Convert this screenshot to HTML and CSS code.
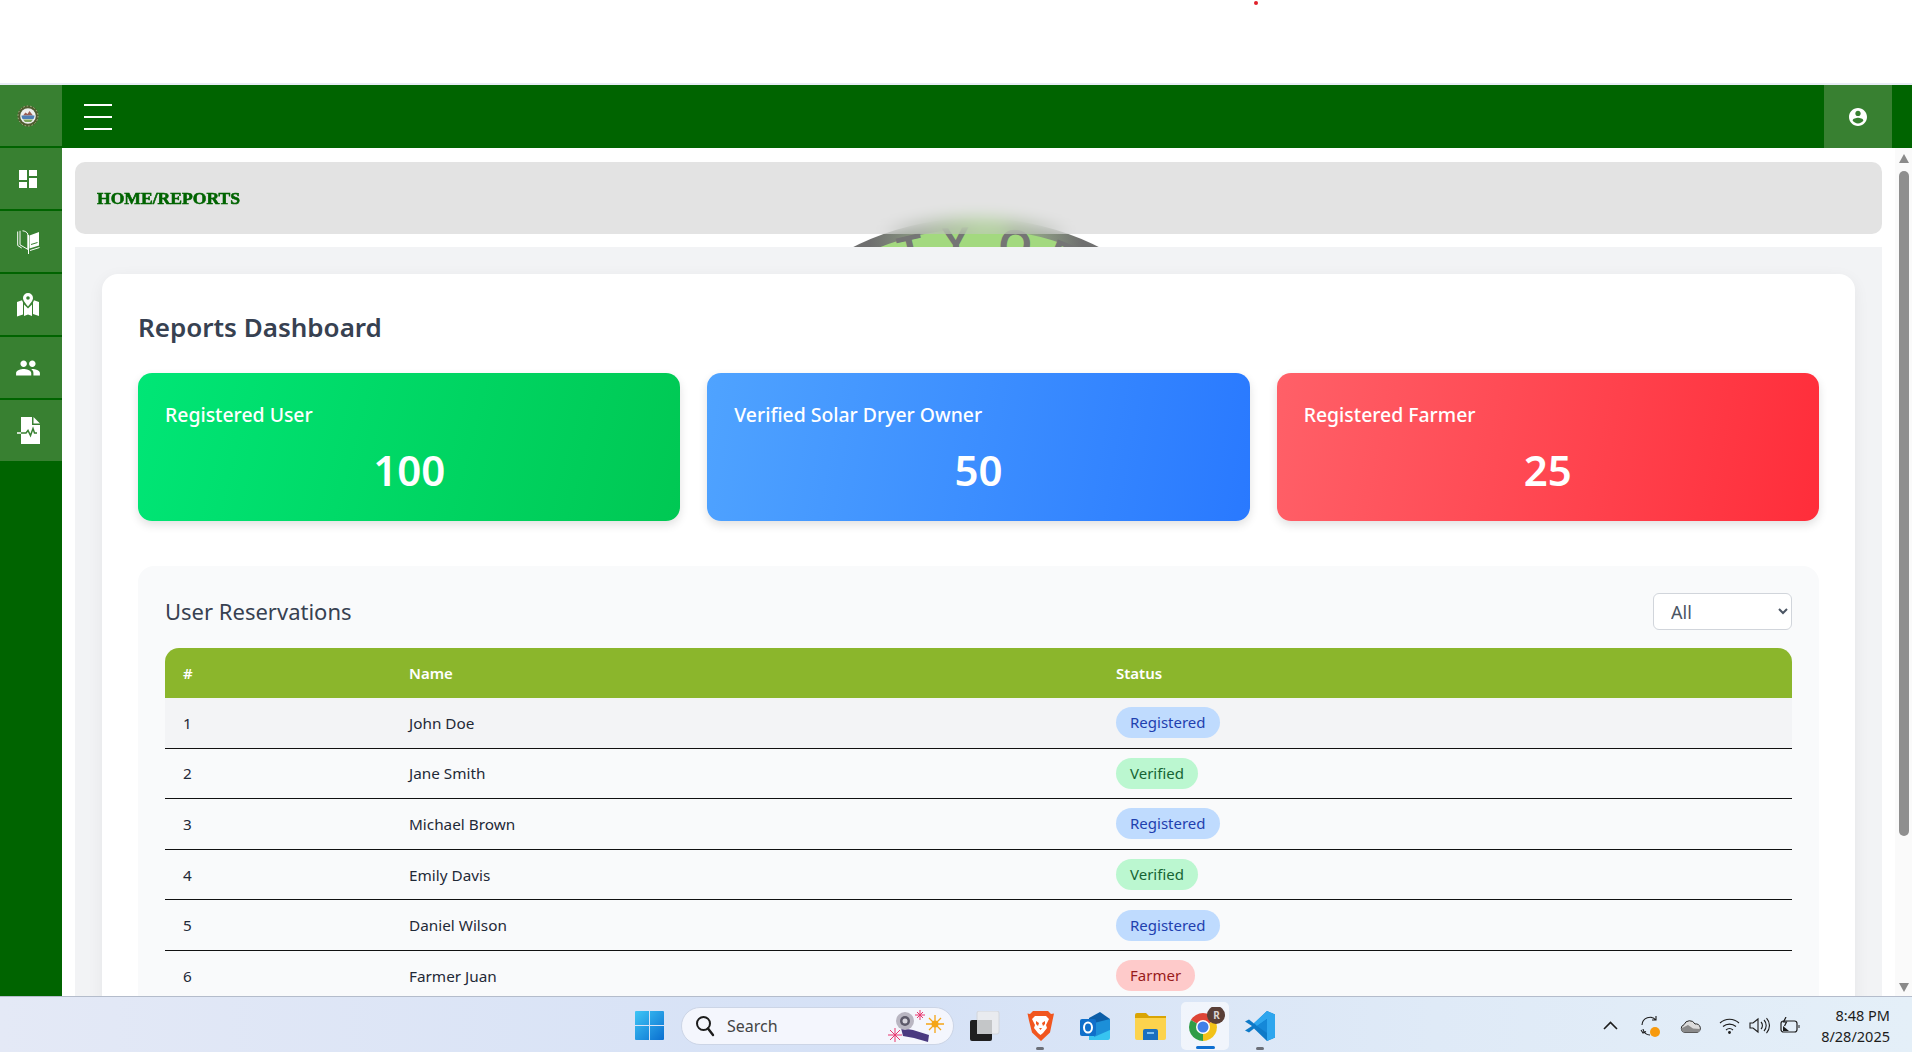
FILE: index.html
```html
<!DOCTYPE html>
<html lang="en">
<head>
<meta charset="utf-8">
<title>Reports Dashboard</title>
<link rel="stylesheet" href="styles.css">
</head>
<body>
<div class="top-strip"><span class="red-dot"></span></div>
<div class="app">
  <aside class="sidebar">
    <a class="side-item">
      <svg width="24" height="24" viewBox="0 0 24 24"><circle cx="12" cy="12" r="10.500" fill="#4f5c2f"/><circle cx="12" cy="12" r="10" fill="none" stroke="#a9b98a" stroke-width="1" stroke-dasharray="1.500 2"/><circle cx="12" cy="12" r="7.800" fill="#eef1ee"/><path d="M7 11.500l2.500-3 2 1.500 2-3 3.500 4.500z" fill="#9a5f55"/><path d="M5.500 11.500h13a6.500 6.500 0 0 1-1 3.500h-11a6.500 6.500 0 0 1-1-3.500z" fill="#4d7fb5"/><path d="M7 15.500h10l-2 2.500H9z" fill="#7da65a"/></svg>
    </a>
    <a class="side-item">
      <svg width="24" height="24" viewBox="0 0 24 24"><path fill="#fff" d="M3 13h8V3H3v10zm0 8h8v-6H3v6zm10 0h8V11h-8v10zm0-18v6h8V3h-8z"/></svg>
    </a>
    <a class="side-item">
      <svg width="23" height="24" viewBox="0 0 23 24"><path fill="#fff" d="M12.500 5.500L22 2v13.500l-9.500 3z"/><g fill="none" stroke="#fff" stroke-width="1"><path d="M.7 1.500v14l4 2.500M3 .8v14l8.500 5M5.500.8C8 1 9.800 2 10.800 4v15"/><path d="M11.500 5v19"/><path d="M13 20.500l9.500-3"/></g><path d="M14 14.500l6.500-2" stroke="#388031" stroke-width="1"/></svg>
    </a>
    <a class="side-item">
      <svg width="24" height="24" viewBox="0 0 24 24"><path fill="#fff" fill-rule="evenodd" d="M12 0a5 5 0 0 1 5 5c0 2.500-3 6-5 8.500C10 11 7 7.500 7 5a5 5 0 0 1 5-5zm0 3.200a1.800 1.800 0 1 0 0 3.600 1.800 1.800 0 0 0 0-3.600z"/><path fill="#fff" d="M1 9l5-1.800 1 2.300v12L1 23.500zM8 11.500l4 4 4-4V23l-4-1.500L8 23zM17 9.500l1-2.300L23 9v14l-6-2z"/></svg>
    </a>
    <a class="side-item">
      <svg width="26" height="26" viewBox="0 0 24 24"><path fill="#fff" d="M16 11c1.660 0 2.990-1.340 2.990-3S17.660 5 16 5c-1.660 0-3 1.340-3 3s1.340 3 3 3zm-8 0c1.660 0 2.990-1.340 2.990-3S9.660 5 8 5C6.340 5 5 6.340 5 8s1.340 3 3 3zm0 2c-2.330 0-7 1.170-7 3.500V19h14v-2.500c0-2.330-4.670-3.500-7-3.500zm8 0c-.290 0-.620.020-.970.050 1.160.840 1.970 1.970 1.970 3.450V19h6v-2.500c0-2.330-4.670-3.500-7-3.500z"/></svg>
    </a>
    <a class="side-item">
      <svg width="23" height="27" viewBox="0 0 23 27"><path fill="#fff" d="M4 0h11v8h8v19H4zM16.500 0L23 6.500h-6.500z"/><path d="M0 16h9l2-2.500 2.500 5 2.500-7 1.500 4.500h2.500" fill="none" stroke="#388031" stroke-width="1.500"/><path d="M0 16h4" stroke="#fff" stroke-width="1.500"/></svg>
    </a>
  </aside>
  <div class="right-col">
    <header class="topbar">
      <button class="burger"><span></span><span></span><span></span></button>
      <button class="profile">
        <svg width="18" height="18" viewBox="2 2 20 20"><path fill="#fff" d="M12 2C6.480 2 2 6.480 2 12s4.480 10 10 10 10-4.480 10-10S17.520 2 12 2zm0 3c1.660 0 3 1.340 3 3s-1.340 3-3 3-3-1.340-3-3 1.340-3 3-3zm0 14.200c-2.500 0-4.710-1.280-6-3.220.030-1.990 4-3.080 6-3.080 1.990 0 5.970 1.090 6 3.080-1.290 1.940-3.500 3.220-6 3.220z"/></svg>
      </button>
    </header>
    <div class="body-row">
      <main class="content">
        <svg class="watermark" width="600" height="300" viewBox="0 0 600 300">
          <defs>
            <path id="arc" d="M 40 276 A 236 236 0 0 1 512 276"/>
            <linearGradient id="ring" gradientUnits="userSpaceOnUse" x1="170" y1="0" x2="382" y2="0">
              <stop offset="0" stop-color="#6f6f6f"/>
              <stop offset="0.25" stop-color="#8d9d84"/>
              <stop offset="0.45" stop-color="#a3d97f"/>
              <stop offset="0.6" stop-color="#a3d97f"/>
              <stop offset="0.8" stop-color="#8d9d84"/>
              <stop offset="1" stop-color="#6f6f6f"/>
            </linearGradient>
          </defs>
          <circle cx="276" cy="276" r="274" fill="url(#ring)"/>
          <circle cx="276" cy="276" r="263" fill="#a3d97f"/>
          <text class="wm-text"><textPath href="#arc" startOffset="47.400%" text-anchor="middle">CITY OF</textPath></text>
        </svg>
        <div class="breadcrumb">HOME/REPORTS</div>
        <section class="panel">
          <div class="card">
            <h1 class="title">Reports Dashboard</h1>
            <div class="stats">
              <div class="stat stat-green"><div class="stat-label">Registered User</div><div class="stat-num">100</div></div>
              <div class="stat stat-blue"><div class="stat-label">Verified Solar Dryer Owner</div><div class="stat-num">50</div></div>
              <div class="stat stat-red"><div class="stat-label">Registered Farmer</div><div class="stat-num">25</div></div>
            </div>
            <div class="res-card">
              <div class="res-head">
                <h2 class="res-title">User Reservations</h2>
                <select class="res-select"><option>All</option></select>
              </div>
              <table class="res-table">
                <colgroup><col class="c1"><col class="c2"><col class="c3"></colgroup>
                <thead><tr><th>#</th><th>Name</th><th>Status</th></tr></thead>
                <tbody>
                  <tr><td>1</td><td>John Doe</td><td><span class="badge b-reg">Registered</span></td></tr>
                  <tr><td>2</td><td>Jane Smith</td><td><span class="badge b-ver">Verified</span></td></tr>
                  <tr><td>3</td><td>Michael Brown</td><td><span class="badge b-reg">Registered</span></td></tr>
                  <tr><td>4</td><td>Emily Davis</td><td><span class="badge b-ver">Verified</span></td></tr>
                  <tr><td>5</td><td>Daniel Wilson</td><td><span class="badge b-reg">Registered</span></td></tr>
                  <tr><td>6</td><td>Farmer Juan</td><td><span class="badge b-far">Farmer</span></td></tr>
                </tbody>
              </table>
            </div>
          </div>
        </section>
      </main>
      <div class="scrollbar">
        <span class="arrow-up"></span>
        <span class="thumb"></span>
        <span class="arrow-down"></span>
      </div>
    </div>
  </div>
</div>
<footer class="taskbar">
  <div class="tb-center">
    <div class="tb-icon">
      <svg width="29" height="29" viewBox="0 0 29 29"><defs><linearGradient id="win" x1="0" y1="0" x2="1" y2="1"><stop offset="0" stop-color="#3fc6f6"/><stop offset="1" stop-color="#0a6fd0"/></linearGradient></defs><path fill="url(#win)" d="M1 0h13v14H0V1a1 1 0 0 1 1-1zM15 0h13a1 1 0 0 1 1 1v13H15zM0 15h14v14H1a1 1 0 0 1-1-1zM15 15h14v13a1 1 0 0 1-1 1H15z"/></svg>
    </div>
    <div class="search">
      <svg class="search-glass" width="20" height="22" viewBox="0 0 20 22"><circle cx="8.500" cy="8.500" r="6.500" fill="none" stroke="#1c1c1c" stroke-width="2"/><path d="M13 13.500l5 6.500" stroke="#1c1c1c" stroke-width="2.400" stroke-linecap="round"/></svg>
      <span class="search-text">Search</span>
      <svg class="search-art" width="62" height="36" viewBox="0 0 62 36"><g fill="none" stroke="#e8366e" stroke-width="1"><path d="M8 20v14M1 27h14M3 22l10 10M13 22L3 32"/><path d="M33 2v10M28 7h10M30 4l6 6M36 4l-6 6"/></g><g stroke="#f5a516" stroke-width="1.300"><path d="M48 7v18M39 16h18M42 10l12 12M54 10L42 22"/></g><circle cx="48" cy="16" r="3.500" fill="#f5a516"/><path d="M14 20l12 2 16 5-1 7-14-4-11-2z" fill="#4a3a80"/><circle cx="18" cy="13" r="9" fill="#b9b6c2"/><circle cx="18" cy="13" r="5" fill="#5d5a6a"/><circle cx="18" cy="13" r="2.500" fill="#d8d6de"/></svg>
    </div>
    <div class="tb-icon">
      <svg width="30" height="30" viewBox="0 0 30 30"><rect x="7" y="0" width="22" height="23" rx="2" fill="#e9ebef" stroke="#d2d6dc"/><rect x="0" y="9" width="22" height="21" rx="2" fill="#1f1f1f"/><rect x="7" y="9" width="15" height="14" fill="#c4c6c8"/></svg>
    </div>
    <div class="tb-icon">
      <svg width="27" height="32" viewBox="0 0 27 32"><path fill="#f1561f" d="M6 1h15l3 3 3-.500-1.500 7-2.500 12-9 8.500-9-8.500L2 10.500.5 3.500 3 4z"/><path fill="#fff" d="M8 6h11l3 3-3 6 1 3-4 5-2.500 2L11 23l-4-5 1-3-3-6z"/><path fill="#f1561f" d="M9 11l3 2-1 3-2-2zM18 11l-3 2 1 3 2-2zM12 18h3l-1.500 2z"/></svg>
      <span class="dot"></span>
    </div>
    <div class="tb-icon">
      <svg width="30" height="28" viewBox="0 0 30 28"><path fill="#0c5ea8" d="M9 6L20 0l10 7v9H9z"/><path fill="#37c4f0" d="M9 16h21v10a2 2 0 0 1-2 2H9z"/><path fill="#1c8fd8" d="M14 11l16-4v11L14 25z"/><rect x="0" y="7" width="16" height="17" rx="2" fill="#0f6fca"/><ellipse cx="8" cy="15.500" rx="4" ry="5" fill="none" stroke="#fff" stroke-width="2"/></svg>
    </div>
    <div class="tb-icon">
      <svg width="31" height="28" viewBox="0 0 31 28"><path fill="#d9a404" d="M0 3a2 2 0 0 1 2-2h9l3 3h17v8H0z"/><path fill="#fcd34d" d="M0 6h31v20a2 2 0 0 1-2 2H2a2 2 0 0 1-2-2z"/><path fill="#1a6fc0" d="M8 19a2 2 0 0 1 2-2h11a2 2 0 0 1 2 2v9H8z"/><rect x="12" y="20" width="7" height="2" fill="#7fc0f0"/></svg>
    </div>
    <div class="tb-icon tb-active">
      <svg width="40" height="38" viewBox="0 0 40 38"><path fill="#dd4436" d="M18 20L5.900 13A14 14 0 0 1 30.100 13z"/><path fill="#f2c218" d="M18 20L30.100 13A14 14 0 0 1 18 34z"/><path fill="#2f9d47" d="M18 20L18 34A14 14 0 0 1 5.900 13z"/><circle cx="18" cy="20" r="7" fill="#fff"/><circle cx="18" cy="20" r="5.500" fill="#3f7fe8"/><circle cx="31" cy="8" r="9" fill="#5a3f37"/></svg>
      <span class="avatar-r">R</span>
      <span class="active-bar"></span>
    </div>
    <div class="tb-icon">
      <svg width="30" height="30" viewBox="0 0 30 30"><path fill="#0e7ac8" d="M22 0l8 3.500v23L22 30 9 17.500l-5 4-4-2 7-4.500-7-4.500 4-2 5 4z"/><path fill="#2ea6ee" d="M22 0l8 3.500v23L22 30V8l-10 7-3-3z"/><path fill="#1588d8" d="M22 8v14l-10-7z"/></svg>
      <span class="dot"></span>
    </div>
  </div>
  <div class="tray">
    <svg class="tr chev" width="15" height="9" viewBox="0 0 15 9"><path d="M1 8l6.500-6.500L14 8" fill="none" stroke="#1c1c1c" stroke-width="1.600"/></svg>
    <svg class="tr sync" width="22" height="22" viewBox="0 0 22 22"><path d="M3 10a8 8 0 0 1 14-5M17 1v4h-4M4 14a7 7 0 0 0 7 6" fill="none" stroke="#1c1c1c" stroke-width="1.100"/><path d="M2 15l2 3 3-1.500" fill="none" stroke="#1c1c1c" stroke-width="1.100"/><circle cx="16" cy="17" r="5" fill="#f79a0e"/></svg>
    <svg class="tr cloud" width="21" height="14" viewBox="0 0 21 14"><path d="M5 13.500a4 4 0 0 1-1-7.800A6 6 0 0 1 15 5a4.300 4.300 0 0 1 2 8.500z" fill="#dcdcdc" stroke="#2a2a2a" stroke-width="1"/><path d="M1 9.500L8 6l5 3.500 7 .5c.5 2-1 3.500-3 3.500H5C3 13.500 1.500 12 1 9.500z" fill="#8a8a8a"/></svg>
    <svg class="tr wifi" width="21" height="17" viewBox="0 0 21 17"><g fill="none" stroke="#1c1c1c" stroke-width="1.100"><path d="M1 6a14 14 0 0 1 19 0"/><path d="M4 9.500a10 10 0 0 1 13 0"/><path d="M7 13a5.500 5.500 0 0 1 7 0"/></g><circle cx="10.500" cy="15.500" r="1.400" fill="#1c1c1c"/></svg>
    <svg class="tr vol" width="21" height="17" viewBox="0 0 21 17"><path d="M1 6h3l5-4v13l-5-4H1z" fill="none" stroke="#1c1c1c" stroke-width="1.100"/><path d="M12 5a5 5 0 0 1 0 7M15 3a8 8 0 0 1 0 11M17.500 1a11 11 0 0 1 0 15" fill="none" stroke="#1c1c1c" stroke-width="1.100"/></svg>
    <svg class="tr batt" width="21" height="17" viewBox="0 0 21 17"><rect x="1" y="4" width="16" height="11" rx="2.500" fill="none" stroke="#1c1c1c" stroke-width="1.200"/><path d="M18.500 8v3h1V8z" fill="#1c1c1c"/><path d="M3 14V9l6 5z" fill="#1c1c1c"/><path d="M6 0L3.500 5h3L4.500 9" fill="none" stroke="#1c1c1c" stroke-width="1.200"/></svg>
    <div class="clock"><div>8:48 PM</div><div>8/28/2025</div></div>
  </div>
</footer>
</body>
</html>
```
FILE: styles.css
```css
* { box-sizing: border-box; }
html, body { margin: 0; height: 100%; overflow: hidden; }
body {
  display: flex;
  flex-direction: column;
  height: 1052px;
  background: #fff;
  font-family: "Noto Sans", Lato, sans-serif;
}
.top-strip {
  position: relative;
  height: 85px;
  flex: none;
  background: #fff;
  border-bottom: 2px solid #e8ecf5;
}
.red-dot {
  position: absolute;
  left: 1254px;
  top: 1px;
  width: 4px;
  height: 4px;
  border-radius: 50%;
  background: #e0202a;
}
.app { flex: 1; min-height: 0; display: flex; }
.sidebar {
  width: 62px;
  flex: none;
  background: #006400;
}
.side-item {
  display: flex;
  align-items: center;
  justify-content: center;
  height: 63px;
  padding-right: 6px;
  background: #388031;
  border-bottom: 2px solid #006400;
}
.side-item:last-child { border-bottom: 0; height: 61px; }
.right-col { flex: 1; min-width: 0; display: flex; flex-direction: column; }
.topbar {
  height: 63px;
  flex: none;
  background: #006400;
  display: flex;
  align-items: stretch;
  justify-content: space-between;
  padding-right: 20px;
}
.burger {
  background: none;
  border: 0;
  padding: 0;
  margin-left: 22px;
  width: 28px;
  display: flex;
  flex-direction: column;
  justify-content: center;
  gap: 10px;
}
.burger span { display: block; height: 2px; background: #fff; }
.profile {
  width: 68px;
  background: #388031;
  border: 0;
  padding: 0;
  display: flex;
  align-items: center;
  justify-content: center;
}
.body-row { flex: 1; min-height: 0; display: flex; }
.content {
  position: relative;
  flex: 1;
  min-width: 0;
  overflow: hidden;
  padding: 14px 13px 0;
  display: flex;
  flex-direction: column;
  gap: 13px;
  background: #fff;
}
.watermark {
  position: absolute;
  left: 638px;
  top: 68px;
}
.wm-text {
  font-family: "Liberation Sans", sans-serif;
  font-weight: 700;
  font-size: 42px;
  letter-spacing: 16px;
  word-spacing: -17px;
  fill: #757575;
}
.breadcrumb {
  position: relative;
  flex: none;
  height: 72px;
  display: flex;
  align-items: center;
  padding-left: 22px;
  border-radius: 10px;
  background: rgba(200, 200, 200, 0.5);
  backdrop-filter: blur(8px);
  color: #006400;
  font-family: "Liberation Serif", serif;
  font-weight: 700;
  font-size: 17.600px;
  -webkit-text-stroke: 0.6px #006400;
}
.panel {
  position: relative;
  flex: 1;
  background: #f2f3f5;
  padding: 27px 27px 0;
}
.card {
  background: #fff;
  border-radius: 16px;
  padding: 34px 36px 0;
  box-shadow: 0 4px 16px rgba(0, 0, 0, 0.06);
  min-height: 800px;
}
.title {
  margin: 0 0 27px;
  font-size: 26px;
  line-height: 38px;
  font-weight: 600;
  color: #374151;
}
.stats {
  display: grid;
  grid-template-columns: repeat(3, 1fr);
  gap: 27px;
  margin-bottom: 45px;
}
.stat {
  height: 148px;
  border-radius: 14px;
  padding: 28px 27px 0;
  color: #fff;
  box-shadow: 0 4px 10px rgba(0, 0, 0, 0.12);
}
.stat-green { background: linear-gradient(105deg, #00e676, #00c853); }
.stat-blue { background: linear-gradient(100deg, #4fa3ff, #2979ff); }
.stat-red { background: linear-gradient(100deg, #ff6068, #ff2d3a); }
.stat-label { font-size: 19.400px; line-height: 28px; font-weight: 500; }
.stat-num {
  margin-top: 15px;
  text-align: center;
  font-size: 42px;
  line-height: 52px;
  font-weight: 600;
}
.res-card {
  background: #f9fafb;
  border-radius: 16px;
  padding: 27px 27px 0;
  min-height: 500px;
}
.res-head {
  display: flex;
  align-items: center;
  justify-content: space-between;
  margin-bottom: 18px;
}
.res-title {
  margin: 0;
  font-size: 22px;
  line-height: 37px;
  font-weight: 400;
  color: #374151;
}
.res-select {
  width: 139px;
  height: 37px;
  padding: 0 13px;
  background: #fff;
  border: 1px solid #d1d5db;
  border-radius: 6px;
  color: #4b5563;
  font-family: inherit;
  font-size: 18px;
}
.res-table {
  width: 100%;
  table-layout: fixed;
  border-collapse: separate;
  border-spacing: 0;
}
.c1 { width: 226px; }
.c2 { width: 707px; }
.res-table th {
  height: 50px;
  padding: 0 18px;
  background: #8bb62c;
  color: #fff;
  text-align: left;
  font-size: 15px;
  font-weight: 600;
}
.res-table th:first-child { border-top-left-radius: 14px; }
.res-table th:last-child { border-top-right-radius: 14px; }
.res-table td {
  height: 50.600px;
  padding: 0 18px;
  color: #1f2937;
  font-size: 15.300px;
  border-bottom: 1px solid #111;
}
.res-table tbody tr td { background: #f9fafb; }
.res-table tbody tr:first-child td { background: #f3f4f6; }
.badge {
  display: inline-block;
  height: 31px;
  line-height: 31px;
  padding: 0 14px;
  border-radius: 16px;
  font-size: 15px;
}
.b-reg { background: #bfdbfe; color: #1e40af; }
.b-ver { background: #bbf7d0; color: #166534; }
.b-far { background: #fecaca; color: #991b1b; }
.scrollbar {
  width: 17px;
  flex: none;
  background: #fafafa;
  display: flex;
  flex-direction: column;
  align-items: center;
  padding-top: 6px;
}
.arrow-up, .arrow-down {
  width: 0;
  height: 0;
  border-left: 5.500px solid transparent;
  border-right: 5.500px solid transparent;
}
.arrow-up { border-bottom: 9px solid #8a8a8a; }
.arrow-down { border-top: 9px solid #8a8a8a; margin-top: auto; margin-bottom: 4px; }
.thumb {
  width: 10px;
  height: 665px;
  margin-top: 8px;
  border-radius: 5px;
  background: #8f8f8f;
}
.taskbar {
  height: 56px;
  flex: none;
  display: flex;
  align-items: center;
  padding: 2px 22px 0 625px;
  border-top: 1px solid #b4bccb;
  background: linear-gradient(90deg, #e4e9f6 0%, #d5e1f6 45%, #dfeaf7 75%, #e4eff8 100%);
}
.tb-center { display: flex; align-items: center; gap: 7px; }
.tb-icon {
  position: relative;
  width: 48px;
  height: 48px;
  display: flex;
  align-items: center;
  justify-content: center;
  border-radius: 5px;
}
.tb-active { background: rgba(255, 255, 255, 0.6); }
.search {
  display: flex;
  align-items: center;
  width: 273px;
  height: 38px;
  margin: 0 0 0 1px;
  padding-left: 13px;
  border-radius: 19px;
  background: #f4f6fd;
  border: 1px solid #ccd5e6;
}
.search-text {
  margin-left: 12px;
  font-family: "Noto Sans", sans-serif;
  font-size: 16px;
  color: #444;
}
.search-art { margin-left: auto; margin-right: 4px; }
.dot {
  position: absolute;
  left: 20px;
  bottom: 0;
  width: 8px;
  height: 3px;
  border-radius: 2px;
  background: #6b6f78;
}
.active-bar {
  position: absolute;
  left: 15px;
  bottom: 1px;
  width: 19px;
  height: 3px;
  border-radius: 2px;
  background: #0f6fd0;
}
.avatar-r {
  position: absolute;
  left: 28px;
  top: 6px;
  width: 15px;
  text-align: center;
  font-family: "Noto Sans", sans-serif;
  font-weight: 700;
  font-size: 10px;
  color: #dcd5d2;
}
.tray { margin-left: auto; display: flex; align-items: center; }
.tr { flex: none; }
.chev { margin-right: 21px; }
.sync { margin-right: 19px; }
.cloud { margin-right: 18.500px; }
.wifi { margin-right: 9px; }
.vol { margin-right: 10px; }
.batt { margin-right: 20px; }
.clock {
  font-family: "Noto Sans", sans-serif;
  font-size: 14.500px;
  line-height: 21px;
  text-align: right;
  color: #1c1c1c;
}
```
